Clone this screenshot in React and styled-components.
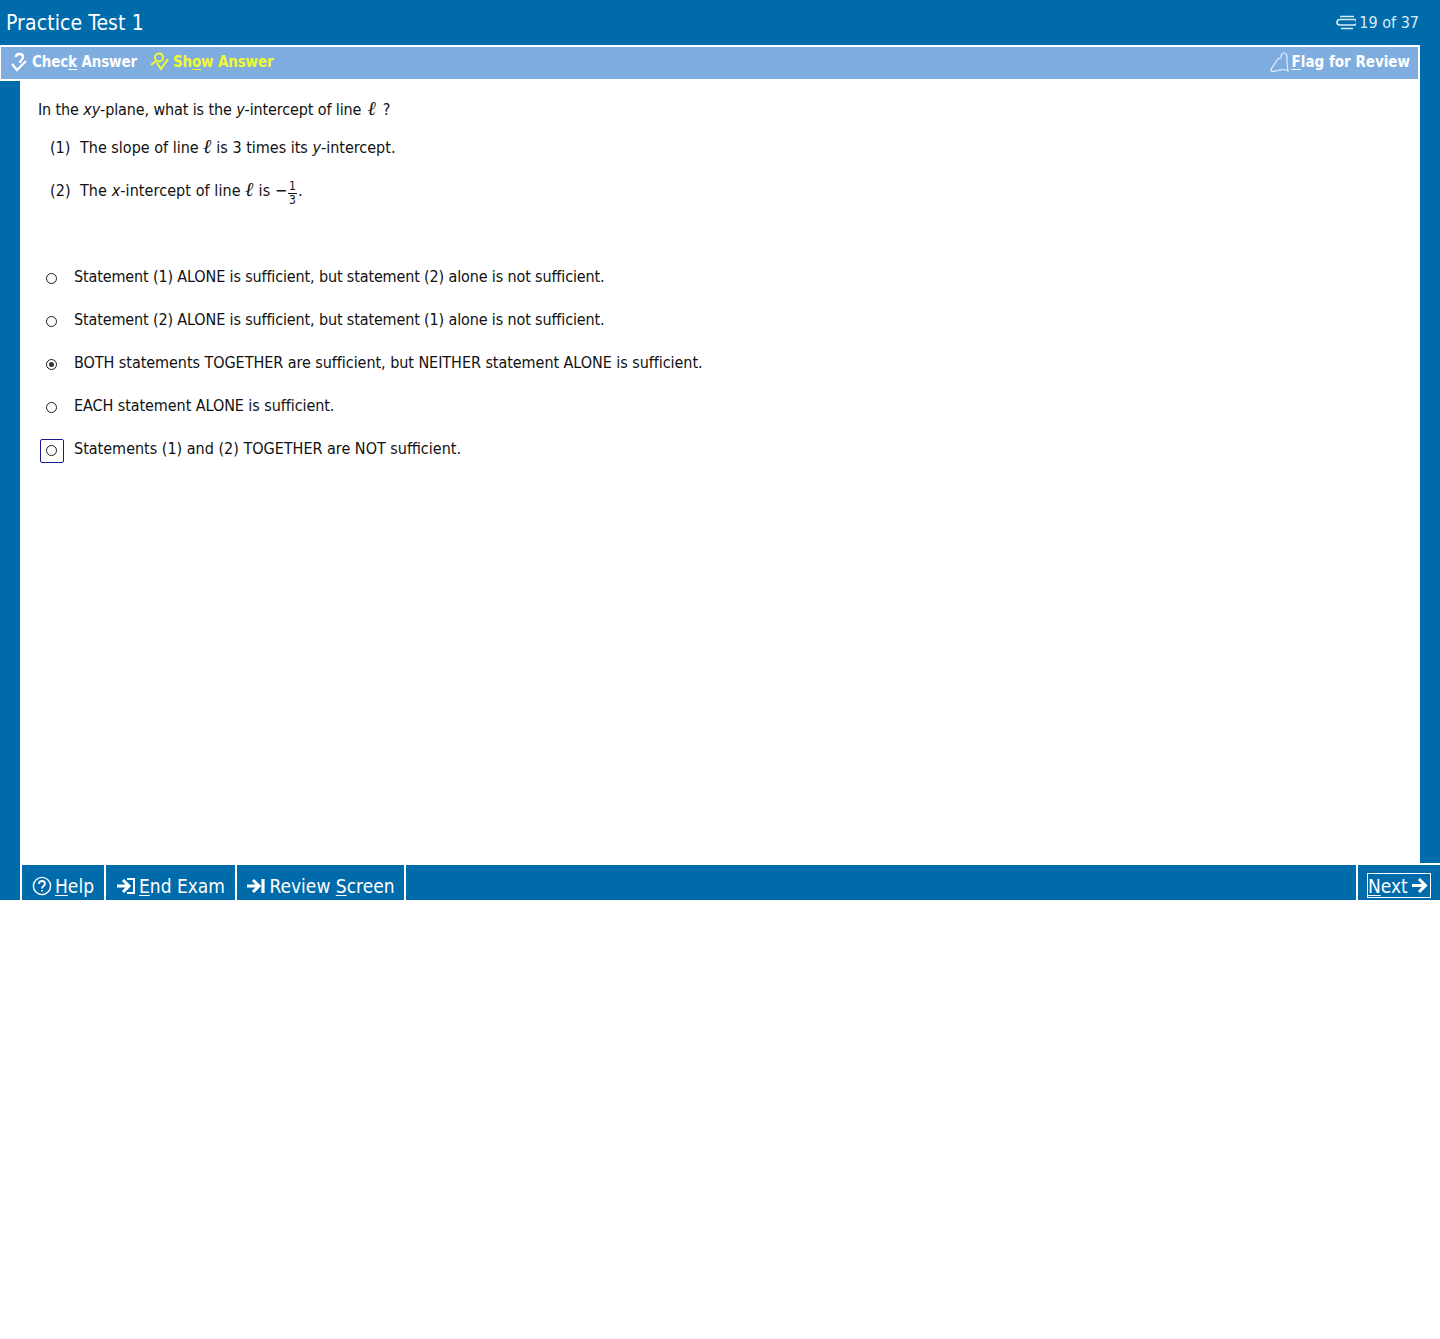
import React from "react";
import styled, { createGlobalStyle } from "styled-components";

const BLUE = "#006bab";
const FONT = `"DejaVu Sans Condensed", "DejaVu Sans", sans-serif`;

const GlobalStyle = createGlobalStyle`
  html, body {
    margin: 0;
    padding: 0;
    background: #fff;
  }
  body {
    font-family: ${FONT};
    font-stretch: condensed;
    min-height: 1339px;
  }
`;

const Screen = styled.div`
  width: 1440px;
  height: 900px;
  display: flex;
  flex-direction: column;
  background: #fff;
`;

const Header = styled.header`
  height: 44px;
  flex: none;
  display: flex;
  align-items: center;
  justify-content: space-between;
  padding: 0 21px 1px 6px;
  background: ${BLUE};
  color: #fff;
`;

const Title = styled.h1`
  margin: 2px 0 0;
  font-size: 21px;
  font-weight: 400;
  letter-spacing: 0.1px;
`;

const Counter = styled.div`
  display: flex;
  align-items: center;
  gap: 3px;
  font-size: 16px;
  color: #d8ecf8;
`;

const ToolbarBand = styled.div`
  flex: none;
  background: ${BLUE};
  padding-right: 20px;
`;

const Toolbar = styled.div`
  height: 30px;
  display: flex;
  align-items: center;
  justify-content: space-between;
  padding: 0 8px 2px 9px;
  background: #7fade0;
  border-top: 2px solid #fff;
  border-right: 2px solid #fff;
  border-bottom: 2px solid #fff;
  border-left: 1px solid #fff;
  color: #fff;
`;

const ToolGroup = styled.div`
  display: flex;
  align-items: center;
  gap: 13px;
  letter-spacing: -0.15px;
`;

const ToolButton = styled.button`
  display: flex;
  align-items: center;
  gap: 3px;
  padding: 0;
  border: 0;
  background: none;
  font-family: ${FONT};
  font-stretch: condensed;
  font-size: 15px;
  font-weight: 700;
  letter-spacing: inherit;
  color: ${(p) => (p.$active ? "#f2fb2e" : "#fff")};
`;

const Key = styled.span`
  text-decoration: underline;
  text-underline-offset: 2px;
`;

const Middle = styled.div`
  flex: 1;
  min-height: 0;
  display: flex;
`;

const SideLeft = styled.div`
  width: 20px;
  flex: none;
  background: ${BLUE};
`;

const SideRight = styled.div`
  width: 20px;
  flex: none;
  background: ${BLUE};
  margin-top: -2px;
  margin-bottom: 2px;
`;

const Content = styled.main`
  flex: 1;
  padding: 18px 0 0 18px;
  color: #111;
  font-size: 16px;
  line-height: 22px;
`;

const Stem = styled.p`
  margin: 0 0 16px;
  letter-spacing: -0.12px;
`;

const Statement = styled.p`
  margin: 0 0 ${(p) => p.$gap || 0}px 12px;
  display: flex;
  align-items: center;
  height: ${(p) => p.$height || 22}px;
  white-space: pre;
  letter-spacing: ${(p) => p.$tracking || 0}px;
`;

const Num = styled.span`
  width: 30px;
  flex: none;
`;

const Ell = styled.span`
  font-family: "DejaVu Serif", serif;
  font-style: italic;
  font-weight: 700;
  font-size: 20px;
  line-height: 0;
  margin: 0 ${(p) => p.$space ?? 0}px;
`;

const Frac = styled.span`
  display: inline-flex;
  flex-direction: column;
  align-items: center;
  font-size: 12px;
  line-height: 12px;
  margin: 0 1px;
  padding-top: 4px;
  & > span {
    padding: 0 1px;
  }
  & > span:first-child {
    border-bottom: 1px solid #111;
    line-height: 13px;
  }
`;

const Options = styled.div`
  margin-top: 61px;
  display: flex;
  flex-direction: column;
  gap: 19px;
`;

const Option = styled.label`
  display: flex;
  align-items: center;
  height: 24px;
  margin-left: 2px;
`;

const OptionText = styled.span`
  letter-spacing: ${(p) => p.$tracking}px;
`;

const RadioBox = styled.span`
  width: 24px;
  height: 24px;
  box-sizing: border-box;
  flex: none;
  display: flex;
  align-items: center;
  justify-content: center;
  margin-right: 10px;
  padding: 0 1px 1px 0;
  position: relative;
  top: 2px;
  border: 1px solid ${(p) => (p.$focused ? "#1a1a8c" : "transparent")};
  border-radius: 2px;
`;

const Radio = styled.span`
  width: 11px;
  height: 11px;
  box-sizing: border-box;
  border: 1.5px solid #1c1c1c;
  border-radius: 50%;
  background: #fff;
  display: flex;
  align-items: center;
  justify-content: center;
  &::after {
    content: "";
    display: ${(p) => (p.$checked ? "block" : "none")};
    width: 5px;
    height: 5px;
    border-radius: 50%;
    background: #333;
  }
`;

const Footer = styled.footer`
  height: 35px;
  flex: none;
  display: flex;
  justify-content: space-between;
  background: ${BLUE};
  color: #fff;
`;

const FooterGroup = styled.div`
  display: flex;
  padding-left: 20px;
`;

const FooterButton = styled.button`
  display: flex;
  align-items: center;
  gap: 3px;
  height: 100%;
  box-sizing: border-box;
  width: ${(p) => p.$width}px;
  justify-content: center;
  padding: 6px 0 0;
  border: 0;
  border-left: 2px solid #fff;
  background: none;
  color: #fff;
  font-family: ${FONT};
  font-stretch: condensed;
  font-size: 19px;
  &:last-child {
    border-right: 2px solid #fff;
    width: ${(p) => p.$width + 2}px;
  }
`;

const NextCell = styled.div`
  width: 84px;
  box-sizing: border-box;
  display: flex;
  align-items: center;
  justify-content: center;
  border-left: 2px solid #fff;
`;

const NextButton = styled.button`
  width: 64px;
  height: 25px;
  box-sizing: border-box;
  display: flex;
  align-items: center;
  justify-content: space-between;
  padding: 0 2px 0 0;
  border: 1px solid #fff;
  background: none;
  color: #fff;
  font-family: ${FONT};
  font-stretch: condensed;
  font-size: 19px;
  position: relative;
  top: 3px;
`;

const PagesIcon = () => (
  <svg width="20" height="15" viewBox="0 0 20 15" fill="none" stroke="#d8ecf8" strokeWidth="1.6">
    <path d="M4 1.500h14M1 7.500c0-2 1-3 3-3h14a2 2 0 0 1 0 5.500H4C2 10 1 9 1 7.500zM5 13.500h12" />
  </svg>
);

const CheckIcon = () => (
  <svg width="19" height="20" viewBox="0 0 19 20" fill="none" stroke="#fff" strokeWidth="2.4">
    <path d="M6 5c0-4 7-4 7 0 0 3-3 3-3 6" />
    <path d="M2 12l5 6 9-9" strokeWidth="2.2" />
  </svg>
);

const ShowIcon = () => (
  <svg width="20" height="20" viewBox="0 0 20 20" fill="none" stroke="#f2fb2e" strokeWidth="2">
    <circle cx="9" cy="5.500" r="4" />
    <path d="M6 9l-5 4M7 11l4 6 7-10" />
  </svg>
);

const FlagIcon = () => (
  <svg width="19" height="20" viewBox="0 0 19 20" fill="none" stroke="#fff" strokeOpacity="0.85" strokeWidth="1.1">
    <path d="M1 19c0-4 3-6 5-9 1-3 3-4 5-4 0-3 1-5 3-5s3 2 3 4v6c0 3 1 5 1 8-3-2-5-2-8-1-3 1-6 2-9 1z" />
  </svg>
);

const HelpIcon = () => (
  <svg width="20" height="20" viewBox="0 0 20 20" fill="none" stroke="#fff" strokeWidth="1.4">
    <circle cx="10" cy="10" r="8.600" />
    <path d="M7 8c0-4 6-4 6 0 0 2-3 2-3 4.500" strokeWidth="1.800" />
    <path d="M10 14v1.600" strokeWidth="1.800" />
  </svg>
);

const EndIcon = () => (
  <svg width="20" height="18" viewBox="0 0 20 18" fill="none" stroke="#fff" strokeWidth="3">
    <path d="M1 9h11M7 3l6 6-6 6" />
    <path d="M11 2h7v14h-7" strokeWidth="2" />
  </svg>
);

const ReviewIcon = () => (
  <svg width="20" height="18" viewBox="0 0 20 18" fill="none" stroke="#fff" strokeWidth="3">
    <path d="M1 9h11M7 3l6 6-6 6" />
    <path d="M17 2v14" strokeWidth="3.200" />
  </svg>
);

const NextIcon = () => (
  <svg width="17" height="17" viewBox="0 0 17 17" fill="none" stroke="#fff" strokeWidth="3">
    <path d="M1 8.500h13M8 2l6.500 6.500L8 15" />
  </svg>
);

const options = [
  { text: "Statement (1) ALONE is sufficient, but statement (2) alone is not sufficient.", tracking: -0.14 },
  { text: "Statement (2) ALONE is sufficient, but statement (1) alone is not sufficient.", tracking: -0.14 },
  { text: "BOTH statements TOGETHER are sufficient, but NEITHER statement ALONE is sufficient.", tracking: -0.05 },
  { text: "EACH statement ALONE is sufficient.", tracking: -0.07 },
  { text: "Statements (1) and (2) TOGETHER are NOT sufficient.", tracking: 0 }
];

export default function App() {
  return (
    <Screen>
      <GlobalStyle />
      <Header>
        <Title>Practice Test 1</Title>
        <Counter>
          <PagesIcon />
          19 of 37
        </Counter>
      </Header>
      <ToolbarBand>
        <Toolbar>
          <ToolGroup>
            <ToolButton>
              <CheckIcon />
              <span>
                Chec<Key>k</Key> Answer
              </span>
            </ToolButton>
            <ToolButton $active>
              <ShowIcon />
              <span>
                Sh<Key>o</Key>w Answer
              </span>
            </ToolButton>
          </ToolGroup>
          <ToolButton>
            <FlagIcon />
            <span>
              <Key>F</Key>lag for Review
            </span>
          </ToolButton>
        </Toolbar>
      </ToolbarBand>
      <Middle>
        <SideLeft />
        <Content>
          <Stem>
            In the <i>xy</i>-plane, what is the <i>y</i>-intercept of line <Ell $space={2}>ℓ</Ell> ?
          </Stem>
          <Statement $gap={19}>
            <Num>(1)</Num>
            <span>
              The slope of line <Ell>ℓ</Ell> is 3 times its <i>y</i>-intercept.
            </span>
          </Statement>
          <Statement $height={26} $tracking={0.08}>
            <Num>(2)</Num>
            <span>
              The <i>x</i>-intercept of line <Ell>ℓ</Ell> is −
            </span>
            <Frac>
              <span>1</span>
              <span>3</span>
            </Frac>
            <span>.</span>
          </Statement>
          <Options>
            {options.map((option, i) => (
              <Option key={i}>
                <RadioBox $focused={i === 4}>
                  <Radio $checked={i === 2} />
                </RadioBox>
                <OptionText $tracking={option.tracking}>{option.text}</OptionText>
              </Option>
            ))}
          </Options>
        </Content>
        <SideRight />
      </Middle>
      <Footer>
        <FooterGroup>
          <FooterButton $width={84}>
            <HelpIcon />
            <span>
              <Key>H</Key>elp
            </span>
          </FooterButton>
          <FooterButton $width={131}>
            <EndIcon />
            <span>
              <Key>E</Key>nd Exam
            </span>
          </FooterButton>
          <FooterButton $width={169}>
            <ReviewIcon />
            <span>
              Review <Key>S</Key>creen
            </span>
          </FooterButton>
        </FooterGroup>
        <NextCell>
          <NextButton>
            <span>
              <Key>N</Key>ext
            </span>
            <NextIcon />
          </NextButton>
        </NextCell>
      </Footer>
    </Screen>
  );
}
